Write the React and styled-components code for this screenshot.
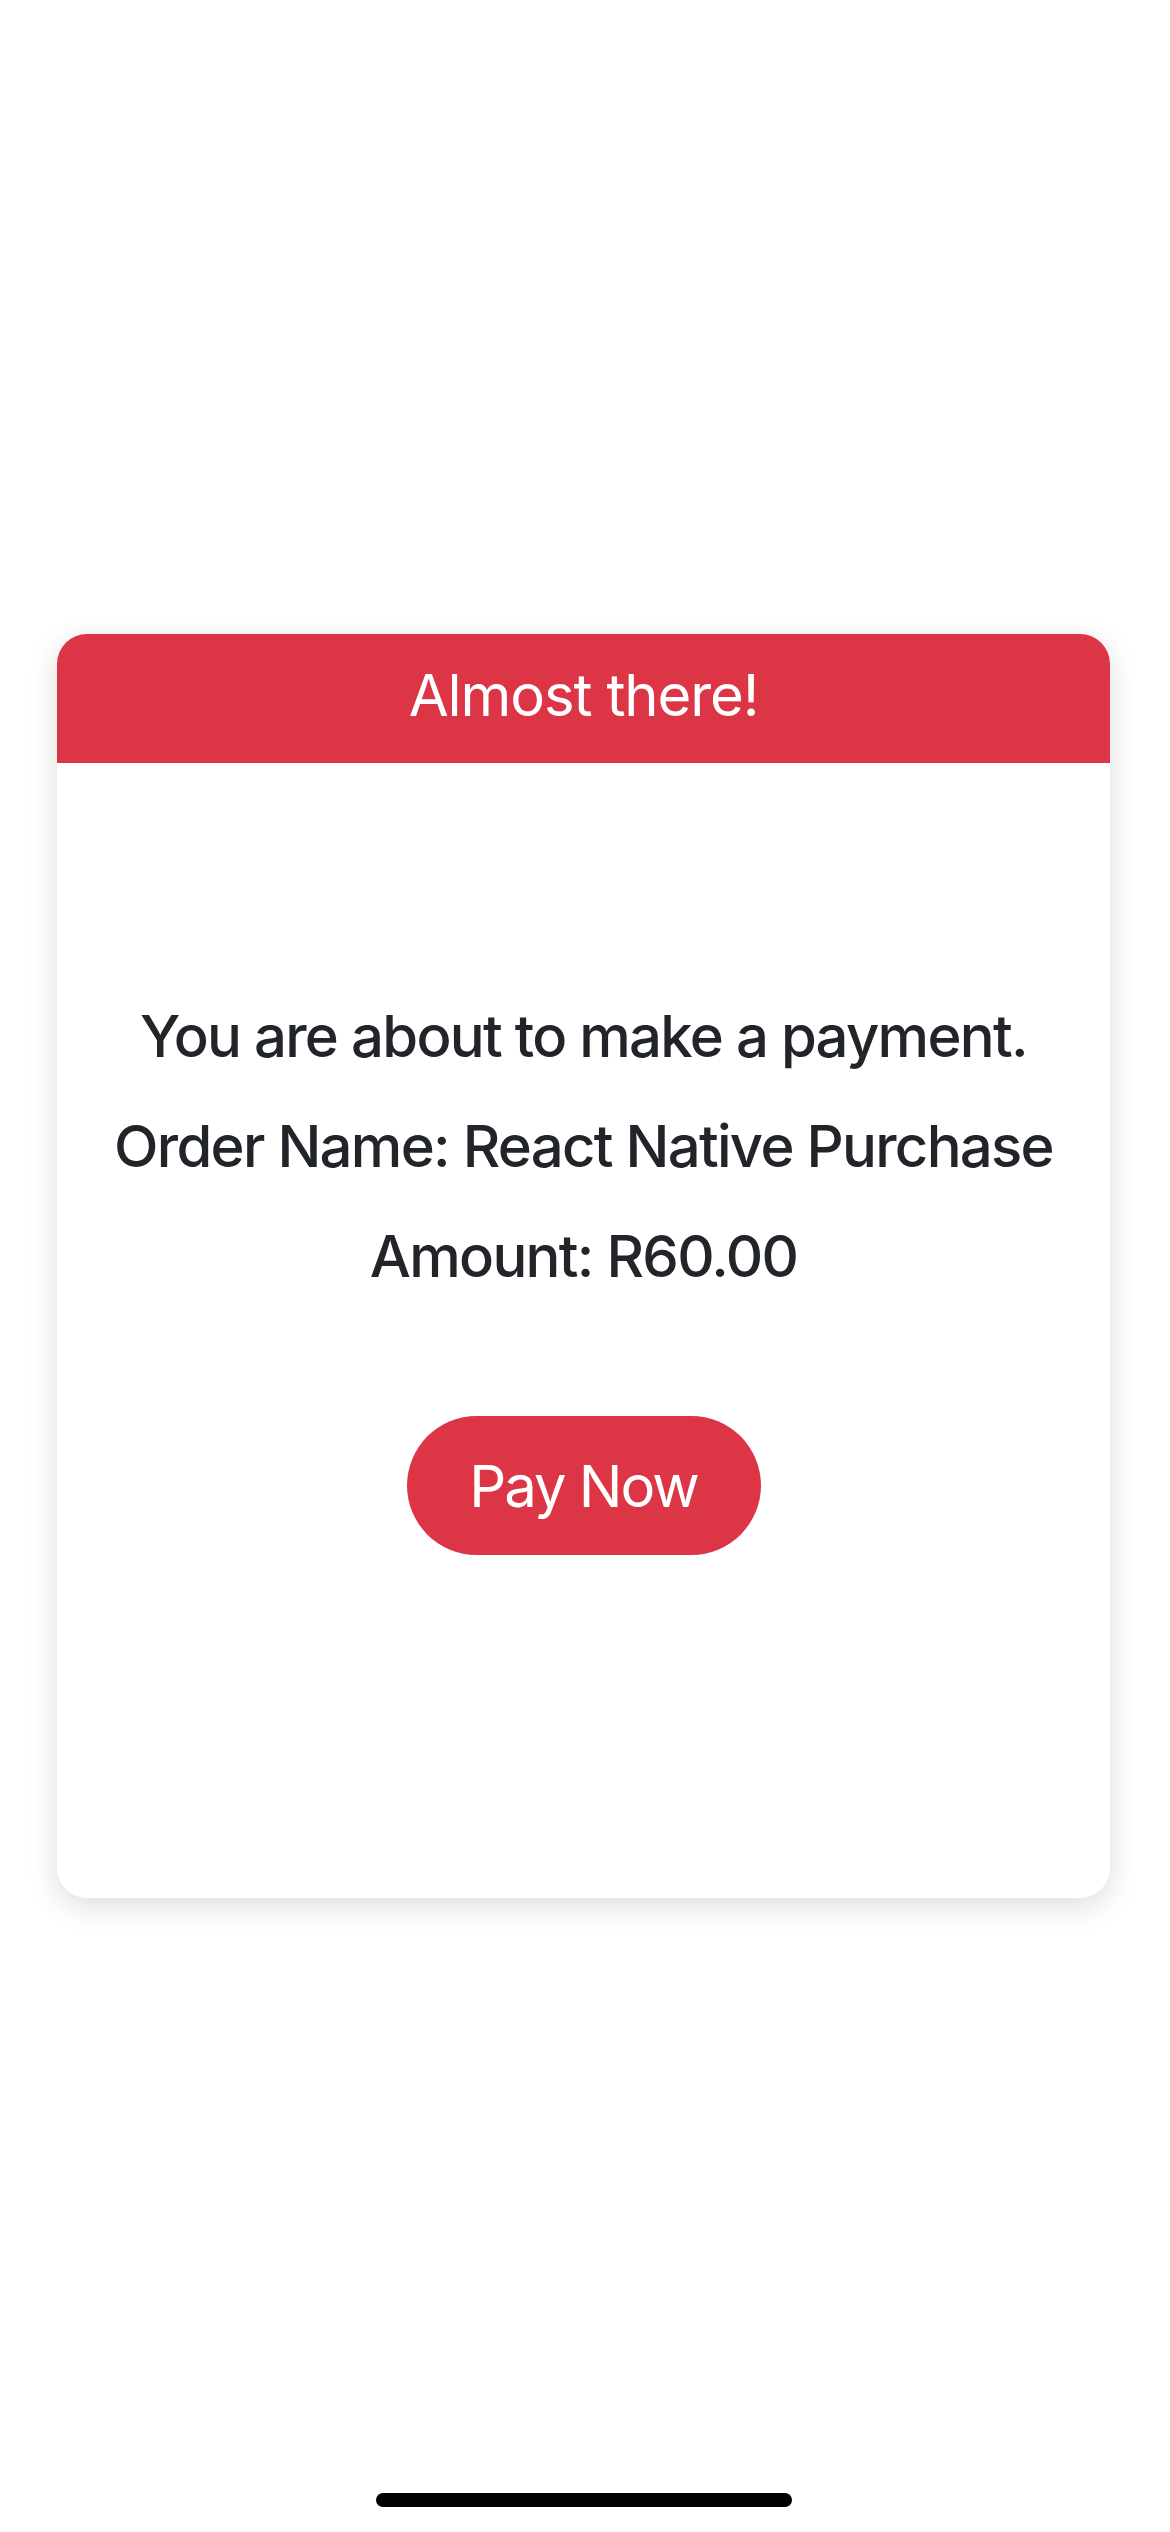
import React from "react";
import styled, { createGlobalStyle } from "styled-components";

const GlobalStyle = createGlobalStyle`
  body {
    margin: 0;
    background: #ffffff;
    font-family: Inter, "Noto Sans", sans-serif;
  }
`;

const Screen = styled.div`
  min-height: 2532px;
  box-sizing: border-box;
  display: flex;
  flex-direction: column;
  align-items: center;
  padding: 634px 60px 25px 57px;
`;

const Card = styled.div`
  width: 1053px;
  background: #ffffff;
  border-radius: 30px;
  overflow: hidden;
  box-shadow: 0 8px 30px rgba(0, 0, 0, 0.14);
`;

const CardHeader = styled.div`
  height: 129px;
  box-sizing: border-box;
  padding-bottom: 8px;
  background: #dc3545;
  color: #ffffff;
  display: flex;
  align-items: center;
  justify-content: center;
  font-size: 58px;
  font-weight: 400;
  letter-spacing: -1.1px;
`;

const CardBody = styled.div`
  display: flex;
  flex-direction: column;
  align-items: center;
  padding: 218px 20px 343px;
`;

const Line = styled.p`
  margin: 0;
  font-size: 58px;
  font-weight: 500;
  line-height: 110px;
  letter-spacing: -1.7px;
  color: #212529;
  text-align: center;
`;

const PayButton = styled.button`
  margin-top: 105px;
  width: 354px;
  height: 139px;
  border: none;
  border-radius: 70px;
  background: #dc3545;
  color: #ffffff;
  font-family: inherit;
  font-size: 58px;
  font-weight: 400;
  letter-spacing: -2px;
  cursor: pointer;
`;

const HomeIndicator = styled.div`
  margin-top: auto;
  width: 416px;
  height: 14px;
  border-radius: 7px;
  background: #000000;
`;

const App = () => {
  return (
    <>
      <GlobalStyle />
      <Screen>
        <Card>
          <CardHeader>Almost there!</CardHeader>
          <CardBody>
            <Line>You are about to make a payment.</Line>
            <Line>Order Name: React Native Purchase</Line>
            <Line>Amount: R60.00</Line>
            <PayButton>Pay Now</PayButton>
          </CardBody>
        </Card>
        <HomeIndicator />
      </Screen>
    </>
  );
};

export default App;
